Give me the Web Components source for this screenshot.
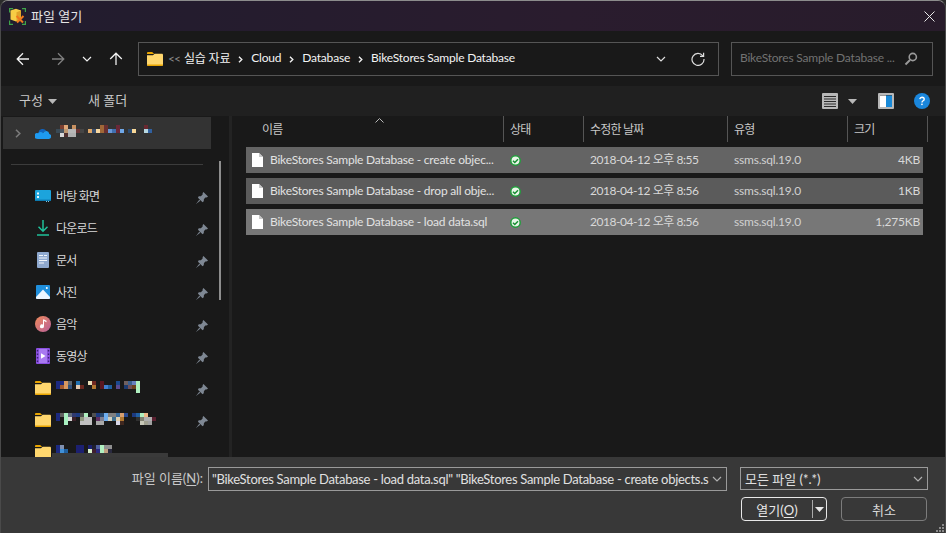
<!DOCTYPE html>
<html lang="ko">
<head>
<meta charset="utf-8">
<title>파일 열기</title>
<style>
  html, body { margin: 0; padding: 0; background: #2b2b2b; overflow: hidden; }
  body { font: 12px Lato, "Noto Sans CJK KR", sans-serif; color: #e6e6e6; }
</style>
</head>
<body>
<file-dialog></file-dialog>

<script>
const FONT = `Lato, "Noto Sans CJK KR", sans-serif`;

const ICONS = {
    back: `<svg width="14" height="14" viewBox="0 0 14 14" fill="none" stroke="currentColor" stroke-width="1.3"><path d="M13 7H1.500M7 1.200 1.200 7 7 12.800"/></svg>`,
    forward: `<svg width="14" height="14" viewBox="0 0 14 14" fill="none" stroke="currentColor" stroke-width="1.3"><path d="M1 7h11.500M7 1.200 12.800 7 7 12.800"/></svg>`,
    up: `<svg width="14" height="14" viewBox="0 0 14 14" fill="none" stroke="currentColor" stroke-width="1.3"><path d="M7 13V1.500M1.200 7 7 1.200 12.800 7"/></svg>`,
    chevron: `<svg width="10" height="6" viewBox="0 0 10 6" fill="none" stroke="currentColor" stroke-width="1.2"><path d="M1 1l4 4 4-4"/></svg>`,
    crumb: `<svg width="5" height="7" viewBox="0 0 5 7" fill="none" stroke="currentColor" stroke-width="1.4"><path d="M1 .7 3.800 3.500 1 6.300"/></svg>`,
    expand: `<svg width="6" height="9" viewBox="0 0 6 9" fill="none" stroke="currentColor" stroke-width="1.6"><path d="M1 .7 4.800 4.500 1 8.300"/></svg>`,
    refresh: `<svg width="14" height="14" viewBox="0 0 14 14" fill="none" stroke="currentColor" stroke-width="1.2"><path d="M11.800 3.800A6 6 0 1 0 13 7"/><path d="M12.600.8v3.600H9"/></svg>`,
    search: `<svg width="14" height="14" viewBox="0 0 14 14" fill="none" stroke="#9a9a9a" stroke-width="1.6"><circle cx="8.800" cy="5" r="3.600"/><path d="M6 8 1.500 12.500" stroke-width="2"/></svg>`,
    folder: `<svg width="16" height="14" viewBox="0 0 16 14"><path d="M0 1.200C0 .5.5 0 1.200 0h4l2 2H0z" fill="#e8a400"/><path d="M0 3.200h6l1.600-1.400h7.200c.7 0 1.200.5 1.200 1.200v9.800c0 .7-.5 1.200-1.200 1.200H1.200C.5 14 0 13.500 0 12.800z" fill="#ffd76e"/><path d="M0 12.800c0 .7.5 1.200 1.200 1.200h13.600c.7 0 1.200-.5 1.200-1.200v-.4H0z" fill="#e8a400"/></svg>`,
    desktop: `<svg width="16" height="12" viewBox="0 0 16 12"><rect width="16" height="11" rx="1" fill="#1ca4dc"/><rect y="9.600" width="16" height="1.400" fill="#0c79ae"/><rect x="2" y="2.500" width="2" height="2" fill="#e8f8ff"/><rect x="2" y="6" width="2" height="2" fill="#e8f8ff"/><rect x="11" y="11" width="1" height="1" fill="#7fc8e8"/><rect x="13" y="11" width="1" height="1" fill="#7fc8e8"/></svg>`,
    download: `<svg width="14" height="16" viewBox="0 0 14 16" fill="none" stroke="#1fc09a" stroke-width="1.500"><path d="M7 0v11M2.500 6.800 7 11.200l4.500-4.400"/><path d="M1 15h12" stroke-width="1.600"/></svg>`,
    doc: `<svg width="12" height="16" viewBox="0 0 12 16"><rect width="12" height="16" rx="1" fill="#8fa9cf"/><path d="M2 3h4v1H2zM7 3h3v1H7zM2 5.500h8v1H2zM2 8h8v1H2zM2 10.500h5v1H2z" fill="#f2f6fc"/></svg>`,
    photo: `<svg width="14" height="14" viewBox="0 0 14 14"><rect width="14" height="14" rx="1" fill="#1f8fdc"/><path d="M0 12 7 4.500 14 12v1a1 1 0 0 1-1 1H1a1 1 0 0 1-1-1z" fill="#eaf6ff"/><circle cx="10.800" cy="3" r="1" fill="#fff"/></svg>`,
    music: `<svg width="16" height="16" viewBox="0 0 16 16"><defs><linearGradient id="m" x1="0" y1="0" x2="1" y2="1"><stop offset="0" stop-color="#ef8a5a"/><stop offset="1" stop-color="#b8609a"/></linearGradient></defs><circle cx="8" cy="8" r="8" fill="url(#m)"/><path d="M8 3.500h1v6.800a2 2 0 1 1-1-1.700zM9 3.500l2.500 1.300v1.400L9 5z" fill="#fff"/></svg>`,
    video: `<svg width="14" height="16" viewBox="0 0 14 16"><rect width="14" height="16" rx="1" fill="#8a4fe0"/><rect x="3" y="1" width="8" height="14" fill="#a879f0"/><path d="M5 5.200v5.600L9.500 8z" fill="#fff"/><path d="M.8 2h1.400v1.500H.8zM.8 5.500h1.400V7H.8zM.8 9h1.400v1.500H.8zM.8 12.500h1.400V14H.8zM11.800 2h1.400v1.500h-1.400zM11.800 5.500h1.400V7h-1.400zM11.800 9h1.400v1.500h-1.400zM11.800 12.500h1.400V14h-1.400z" fill="#3a2070"/></svg>`,
    cloud: `<svg width="16" height="11" viewBox="0 0 16 11"><path d="M3.400 4.400A4.300 4.300 0 0 1 11.300 3a3.400 3.400 0 0 0-3.300 2.200A3.100 3.100 0 0 0 3.400 6.900z" fill="#0f64c0"/><path d="M1.300 10.800A2.500 2.500 0 0 1 3.200 5.200 3.200 3.200 0 0 1 8 5.200 3.600 3.600 0 0 1 11.300 3a3.400 3.400 0 0 1 3 2.900A2.600 2.600 0 0 1 13.500 11H3z" fill="#1e9af0"/></svg>`,
    pin: `<svg width="12" height="12" viewBox="0 0 11 11" fill="#7e8793"><path d="M6.800 0 11 4.200 9.900 5 9 4.800 7.300 6.500 7.100 8.500 6 9.300 1.800 5.200 2.500 4 4.500 3.800 6.200 2 6 1.100zM3 7.100 0 11l3.900-3z"/></svg>`,
    file: `<svg width="11" height="14" viewBox="0 0 11 14"><path d="M0 0h7l4 4v10H0z" fill="#fff"/><path d="M7 0v4h4z" fill="#c8c8c8"/></svg>`,
    ok: `<svg width="11" height="11" viewBox="0 0 11 11"><circle cx="5.500" cy="5.500" r="4.700" fill="#e8f5e8" stroke="#1f9e3a" stroke-width="1.500"/><path d="M3 5.700l1.800 1.800L8 4.200" fill="none" stroke="#1a8f35" stroke-width="1.500"/></svg>`,
    view: `<svg width="16" height="16" viewBox="0 0 16 16"><rect width="16" height="16" rx="1" fill="#b8b8b8"/><path d="M2 3h12v1H2zM2 5.500h12v1H2zM2 8h12v1H2zM2 10.500h12v1H2zM2 13h12v1H2z" fill="#2a2a2a"/></svg>`,
    pane: `<svg width="16" height="16" viewBox="0 0 16 16"><rect width="16" height="16" rx="1" fill="#b8b8b8"/><rect x="2" y="2" width="12" height="12" fill="#fff"/><rect x="8" y="2" width="6" height="12" fill="#1a8ad8"/><path d="M2 2h12v.6H2z" fill="#333"/></svg>`,
    help: `<svg width="16" height="16" viewBox="0 0 16 16"><circle cx="8" cy="8" r="8" fill="#1a86dc"/><path d="M5.800 6.200A2.300 2.300 0 0 1 8 4.300c1.300 0 2.200.8 2.200 1.900 0 1.700-2.200 1.500-2.200 3.300" fill="none" stroke="#fff" stroke-width="1.400"/><rect x="7.200" y="10.600" width="1.500" height="1.500" fill="#fff"/></svg>`,
    app: `<svg width="17" height="17" viewBox="0 0 17 17"><path d="M.6 4.500V.6h3.500M13 .6h3.400v3.500M.6 12.500v3.900H4M13 16.400h3.400V13" fill="none" stroke="#3fa34a" stroke-width="1.200"/><path d="M1.500 2.500 7 .8l5 1.700v8.500L7 13.500l-5.500-2z" fill="#f7cd45"/><path d="M7.500 4.200v9.300L12 11V2.500z" fill="#e0a42a"/><path d="M7.500 8 14 14.500M14.500 8 8 14.500" stroke="#f0781e" stroke-width="2"/></svg>`,
    close: `<svg width="11" height="11" viewBox="0 0 11 11" fill="none" stroke="#e8e8e8" stroke-width="1"><path d="M.5.500l10 10M10.500.500l-10 10"/></svg>`,
    caret: `<svg width="9" height="5" viewBox="0 0 9 5" fill="currentColor"><path d="M0 0h9L4.500 5z"/></svg>`
};

// mosaic of a blurred name, one string per row, "." is an empty cell
class PixelBlur extends HTMLElement {
    constructor() {
        super();
        this.shadowDOM = this.attachShadow({mode: "open"});
    }

    connectedCallback() {
        const rows = this.getAttribute("rows").split("|").map(r => r.trim().split(/\s+/));
        const cols = Math.max(...rows.map(r => r.length));
        let cells = "";
        rows.forEach(r => {
            for (let i = 0; i < cols; i++) {
                const c = r[i] && r[i] !== "." ? `#${r[i]}` : "transparent";
                cells += `<i style="background:${c}"></i>`;
            }
        });
        this.shadowDOM.innerHTML = `
        <style>
            :host { display: grid; grid-template-columns: repeat(${cols}, 4px); grid-auto-rows: 4px; }
            i { display: block; }
        </style>${cells}`;
    }
}

class TitleBar extends HTMLElement {
    constructor() {
        super();
        this.shadowDOM = this.attachShadow({mode: "open"});
    }

    connectedCallback() {
        this.shadowDOM.innerHTML = `
        <style>
            :host {
                display: flex;
                align-items: center;
                height: 30px;
                padding: 0 10px 0 8px;
                background: linear-gradient(90deg, #211c2e, #2a1c2e 60%, #281c2b);
                color: #e4e4e4;
                font-size: 13px;
            }
            .app { display: flex; margin-right: 5px; }
            .title { margin-top: -2px; }
            .close { display: flex; margin-left: auto; }
        </style>
        <span class="app">${ICONS.app}</span>
        <span class="title">파일 열기</span>
        <span class="close">${ICONS.close}</span>`;
    }
}

class AddressBar extends HTMLElement {
    constructor() {
        super();
        this.shadowDOM = this.attachShadow({mode: "open"});
    }

    connectedCallback() {
        this.shadowDOM.innerHTML = `
        <style>
            :host {
                display: flex;
                align-items: center;
                height: 55px;
                padding: 0 12px 0 15px;
                background: #191919;
                color: #f0f0f0;
                box-sizing: border-box;
                letter-spacing: -0.2px;
            }
            .nav { display: flex; align-items: center; }
            .nav span { display: flex; }
            .nav .back { width: 35px; }
            .nav .dim { width: 31px; color: #808080; }
            .nav .small { width: 27px; }
            .nav .last { width: 29px; }
            .path, .find {
                display: flex;
                align-items: center;
                height: 34px;
                box-sizing: border-box;
                border: 1px solid #555;
            }
            .path { width: 581px; padding: 0 13px 0 8px; }
            .path b { font-weight: 400; white-space: nowrap; color: #f4f4f4; margin-top: -2px; }
            .folder { display: flex; margin-right: 5px; }
            .more { width: 16px; color: #8a8a8a; font-size: 12px; letter-spacing: -1px; margin-top: -1px; }
            .crumb { display: flex; margin: 1px 8px 0 8px; }
            .drop { display: flex; margin-left: auto; margin-right: 25px; color: #ddd; }
            .reload { display: flex; color: #ddd; }
            .find {
                width: 202px;
                margin-left: 12px;
                padding: 0 14px 0 8px;
                color: #727272;
                justify-content: space-between;
                white-space: nowrap;
            }
            .find span:first-child { margin-top: -2px; }
            .find span:last-child { display: flex; }
        </style>
        <div class="nav">
            <span class="back">${ICONS.back}</span>
            <span class="dim">${ICONS.forward}</span>
            <span class="small">${ICONS.chevron}</span>
            <span class="last">${ICONS.up}</span>
        </div>
        <div class="path">
            <span class="folder">${ICONS.folder}</span>
            <span class="more">&lt;&lt;</span>
            <b>실습 자료</b><span class="crumb">${ICONS.crumb}</span>
            <b>Cloud</b><span class="crumb">${ICONS.crumb}</span>
            <b>Database</b><span class="crumb">${ICONS.crumb}</span>
            <b>BikeStores Sample Database</b>
            <span class="drop">${ICONS.chevron}</span>
            <span class="reload">${ICONS.refresh}</span>
        </div>
        <div class="find"><span>BikeStores Sample Database ...</span><span>${ICONS.search}</span></div>`;
    }
}

class ToolStrip extends HTMLElement {
    constructor() {
        super();
        this.shadowDOM = this.attachShadow({mode: "open"});
    }

    connectedCallback() {
        this.shadowDOM.innerHTML = `
        <style>
            :host {
                display: flex;
                align-items: center;
                height: 30px;
                padding: 0 15px 0 18px;
                background: #202020;
                color: #c8c8c8;
                font-size: 13px;
            }
            .label { margin-top: -3px; }
            .caret { display: flex; margin-left: 5px; color: #b8b8b8; }
            .new { margin-left: 31px; }
            .right { display: flex; align-items: center; margin-left: auto; }
            .right span { display: flex; }
            .right .caret { margin: 0 21px 0 10px; }
            .right .pane { margin-right: 20px; }
        </style>
        <span class="label">구성</span><span class="caret">${ICONS.caret}</span>
        <span class="label new">새 폴더</span>
        <div class="right">
            <span>${ICONS.view}</span>
            <span class="caret">${ICONS.caret}</span>
            <span class="pane">${ICONS.pane}</span>
            <span>${ICONS.help}</span>
        </div>`;
    }
}

class NavItem extends HTMLElement {
    constructor() {
        super();
        this.shadowDOM = this.attachShadow({mode: "open"});
    }

    connectedCallback() {
        const pin = this.hasAttribute("pinned") ? ICONS.pin : "";
        this.shadowDOM.innerHTML = `
        <style>
            :host {
                display: flex;
                align-items: center;
                height: 32px;
                padding-left: 34px;
                color: #d8d8d8;
                flex: none;
                letter-spacing: -0.8px;
            }
            .icon { display: flex; justify-content: center; width: 16px; margin-right: 5px; }
            .label { margin-top: -2px; }
            .pin { display: flex; margin-left: auto; margin-right: 21px; padding-top: 3px; }
        </style>
        <span class="icon">${ICONS[this.getAttribute("icon")]}</span>
        <span class="label"><slot></slot></span>
        <span class="pin">${pin}</span>`;
    }
}

class SideNav extends HTMLElement {
    constructor() {
        super();
        this.shadowDOM = this.attachShadow({mode: "open"});
    }

    connectedCallback() {
        this.shadowDOM.innerHTML = `
        <style>
            :host {
                display: flex;
                flex-direction: column;
                position: relative;
                width: 228px;
                overflow: hidden;
                box-sizing: content-box;
                border-right: 3px solid #232323;
            }
            .cloud {
                display: flex;
                align-items: center;
                flex: none;
                width: 208px;
                height: 32px;
                margin: 1px 0 0 2px;
                background: #333;
                color: #7a7a7a;
                box-sizing: border-box;
                padding-left: 12px;
            }
            .cloud .arrow { display: flex; margin-right: 14px; }
            .cloud .onedrive { display: flex; margin-right: 5px; }
            .cloud px-blur { margin-bottom: 4px; }
            hr {
                flex: none;
                width: 192px;
                margin: 15px 0 15px 10px;
                border: 0;
                border-top: 1px solid #3c3c3c;
            }
            .last { margin-bottom: 4px; }
            /* scrollbars lie over the list */
            .vbar { position: absolute; left: 218px; top: 45px; width: 2px; height: 139px; background: #8e8e8e; }
            .hbar { position: absolute; left: 51px; bottom: 0; width: 116px; height: 4px; background: #3a3a3a; }
        </style>
        <div class="cloud">
            <span class="arrow">${ICONS.expand}</span>
            <span class="onedrive">${ICONS.cloud}</span>
            <px-blur rows=". 7d4030 e0a878 . c89060 . . . . . . a06838 6a3030 . . 6a2838 . . . . . . 6a2830
                | 3a4a55 4a5560 c09870 b8b8b8 b8b8b8 6a3535 454545 . e0a868 3a5070 f8d8a0 a06838 6a3030 6898d8 4070b0 6a2838 70a8e8 . 2a4a70 f8d898 . . b8d8e0 3060a0
                | . d8d8d8 503030 b0b0b0 b0b0b0"></px-blur>
        </div>
        <hr>
        <nav-item icon="desktop" pinned>바탕 화면</nav-item>
        <nav-item icon="download" pinned>다운로드</nav-item>
        <nav-item icon="doc" pinned>문서</nav-item>
        <nav-item icon="photo" pinned>사진</nav-item>
        <nav-item icon="music" pinned>음악</nav-item>
        <nav-item icon="video" pinned>동영상</nav-item>
        <nav-item icon="folder" pinned>
            <px-blur rows="1c2a80 1c2a80 d89860 606870 . 2070b0 . . e8e0b8 702820 . 5a1820 . . . 1c4a90 . 706060 3a6090 6880c0 b0f0c0
                | 1c2a80 a05830 d89860 30507a . e0c8b0 6a2820 . . b07830 . 5a1820 4080d0 2060a0 . 5a4a90 . 1c3a70 705058 6a4020 b0f0c0
                | . . . . . . . . . . . . . . . . . . . . b0f0c0"></px-blur>
        </nav-item>
        <nav-item icon="folder" pinned>
            <px-blur rows="1c2a80 606060 a8f0c0 606878 303a70 1c3a80 505050 b0f0c0 . 505050 1c3a80 2a4a70 70b0f0 808080 808080 3a6a9a d8a070 2a4a90 . 1c3a80 2060a0 b0f0c0 f0b888
                | 1c2a80 . a8f0c0 d8d8d8 3a2028 . 909880 c0c0c0 c0c0c0 . 603060 808090 70b0f0 d0d0c0 407090 e0d0b0 b07830 . . . 303030 808070 b0b0b0 b0b0b0 5a2030
                | . . a8f0c0 . . . c0c0c0 c0c0c0 c0c0c0 . a8a8a8 a8a8a8 . . . d8d8e8 402820 . . . . c8c8b8 a0a090 a0a0a0"></px-blur>
        </nav-item>
        <nav-item icon="folder">
            <px-blur class="last" rows="1c2a80 8090b0 . . . 1c2070 1c2070 . 1c2070 202030 5060a0 b0f0c0 909090 909090
                | 1c2a80 4090d8 2060a0 . . 1c2070 1c2070 . d8f0c8 402030 2a2a80 b0f0c0 c0a080 2a2a40"></px-blur>
        </nav-item>
        <div class="vbar"></div>
        <div class="hbar"></div>`;
    }
}

class FileRow extends HTMLElement {
    constructor() {
        super();
        this.shadowDOM = this.attachShadow({mode: "open"});
    }

    connectedCallback() {
        const d = this.dataset;
        this.shadowDOM.innerHTML = `
        <style>
            :host {
                display: grid;
                grid-template-columns: 257px 80px 144px 120px 76px;
                align-items: center;
                height: 26px;
                line-height: 16px;
                background: ${d.bg};
                color: #e2e2e2;
                white-space: nowrap;
                letter-spacing: -0.2px;
            }
            .name { display: flex; align-items: center; padding-left: 6px; }
            .name span:first-child { display: flex; margin-right: 7px; }
            .status { display: flex; padding-left: 7px; padding-top: 1px; }
            .date { padding-left: 7px; color: #d8d8d8; letter-spacing: -0.45px; }
            .kind { padding-left: 7px; color: #d0d0d0; }
            .size { text-align: right; padding-right: 3px; color: #d8d8d8; }
        </style>
        <div class="name"><span>${ICONS.file}</span><span>${d.name}</span></div>
        <div class="status">${ICONS.ok}</div>
        <div class="date">${d.date}</div>
        <div class="kind">ssms.sql.19.0</div>
        <div class="size">${d.size}</div>`;
    }
}

class FileList extends HTMLElement {
    constructor() {
        super();
        this.shadowDOM = this.attachShadow({mode: "open"});
    }

    connectedCallback() {
        this.shadowDOM.innerHTML = `
        <style>
            :host { display: block; flex: 1; padding-left: 14px; }
            .head {
                display: grid;
                grid-template-columns: 258px 80px 144px 120px 80px;
                height: 26px;
                margin-bottom: 5px;
                color: #c8c8c8;
                position: relative;
                letter-spacing: -0.8px;
            }
            .head div { display: flex; align-items: center; padding-left: 6px; border-right: 1px solid #555; box-sizing: border-box; padding-bottom: 2px; }
            .head div:first-child { padding-left: 16px; }
            .sort { position: absolute; left: 129px; top: 2px; }
            .rows { display: flex; flex-direction: column; gap: 5px; width: 677px; }
        </style>
        <div class="head">
            <div>이름</div><div>상태</div><div>수정한 날짜</div><div>유형</div><div>크기</div>
            <svg class="sort" width="9" height="5" viewBox="0 0 9 5" fill="none" stroke="#b8b8b8"><path d="M.5 4.500l4-4 4 4"/></svg>
        </div>
        <div class="rows">
            <file-row data-bg="#646464" data-name="BikeStores Sample Database - create objec..." data-date="2018-04-12 오후 8:55" data-size="4KB"></file-row>
            <file-row data-bg="#5b5b5b" data-name="BikeStores Sample Database - drop all obje..." data-date="2018-04-12 오후 8:56" data-size="1KB"></file-row>
            <file-row data-bg="#777777" data-name="BikeStores Sample Database - load data.sql" data-date="2018-04-12 오후 8:56" data-size="1,275KB"></file-row>
        </div>`;
    }
}

class DialogFooter extends HTMLElement {
    constructor() {
        super();
        this.shadowDOM = this.attachShadow({mode: "open"});
    }

    connectedCallback() {
        this.shadowDOM.innerHTML = `
        <style>
            :host {
                display: block;
                position: relative;
                height: 76px;
                padding: 10px 17px 0 0;
                box-sizing: border-box;
                background: #383838;
                color: #e0e0e0;
                font-size: 13px;
            }
            .line { display: flex; justify-content: flex-end; align-items: flex-start; }
            .label { margin-right: 5px; line-height: 22px; color: #c8c8c8; }
            u { text-underline-offset: 2px; }
            .box {
                display: flex;
                align-items: center;
                justify-content: space-between;
                height: 24px;
                box-sizing: border-box;
                border: 1px solid #9a9a9a;
                padding: 0 4px 0 3px;
            }
            .file { width: 519px; margin-right: 13px; }
            .file span:first-child { width: 497px; overflow: hidden; white-space: nowrap; letter-spacing: -0.3px; }
            .type { width: 188px; height: 23px; padding-left: 4px; }
            .box i { display: flex; color: #b0b0b0; }
            .buttons { display: flex; justify-content: flex-end; gap: 14px; margin-top: 6px; padding-right: 1px; }
            .btn {
                display: flex;
                align-items: center;
                justify-content: center;
                width: 86px;
                height: 24px;
                box-sizing: border-box;
                border: 1px solid #7c7c7c;
                border-radius: 4px;
                color: #d8d8d8;
            }
            .open { border-color: #e8e8e8; color: #e8e8e8; }
            .open .text { flex: 1; text-align: center; }
            .open .split { display: flex; align-items: center; justify-content: center; width: 13px; height: 18px; border-left: 1px solid #aaa; color: #e8e8e8; }
            .grip { position: absolute; right: 1px; bottom: 1px; }
        </style>
        <div class="line">
            <span class="label">파일 이름(<u>N</u>):</span>
            <div class="box file">
                <span>"BikeStores Sample Database - load data.sql" "BikeStores Sample Database - create objects.s</span>
                <i>${ICONS.chevron}</i>
            </div>
            <div class="box type"><span>모든 파일 (*.*)</span><i>${ICONS.chevron}</i></div>
        </div>
        <div class="buttons">
            <div class="btn open"><span class="text">열기(<u>O</u>)</span><span class="split">${ICONS.caret}</span></div>
            <div class="btn">취소</div>
        </div>
        <svg class="grip" width="8" height="8" viewBox="0 0 8 8" fill="#8a8a8a"><path d="M6 0h2v2H6zM3 3h2v2H3zM6 3h2v2H6zM0 6h2v2H0zM3 6h2v2H3zM6 6h2v2H6z"/></svg>`;
    }
}

class FileDialog extends HTMLElement {
    constructor() {
        super();
        this.shadowDOM = this.attachShadow({mode: "open"});
    }

    connectedCallback() {
        this.shadowDOM.innerHTML = `
        <style>
            :host {
                display: flex;
                flex-direction: column;
                width: 946px;
                height: 533px;
                box-sizing: border-box;
                border: 1px solid #4a4a4a;
                border-top-color: #8c8c8c;
                border-bottom: 0;
                border-radius: 8px 8px 0 0;
                overflow: hidden;
                font-family: ${FONT};
                font-size: 12px;
            }
            .main { display: flex; height: 341px; background: #191919; }
        </style>
        <title-bar></title-bar>
        <address-bar></address-bar>
        <tool-strip></tool-strip>
        <div class="main">
            <side-nav></side-nav>
            <file-list></file-list>
        </div>
        <dialog-footer></dialog-footer>`;
    }
}

customElements.define("px-blur", PixelBlur);
customElements.define("title-bar", TitleBar);
customElements.define("address-bar", AddressBar);
customElements.define("tool-strip", ToolStrip);
customElements.define("nav-item", NavItem);
customElements.define("side-nav", SideNav);
customElements.define("file-row", FileRow);
customElements.define("file-list", FileList);
customElements.define("dialog-footer", DialogFooter);
customElements.define("file-dialog", FileDialog);
</script>
</body>
</html>
